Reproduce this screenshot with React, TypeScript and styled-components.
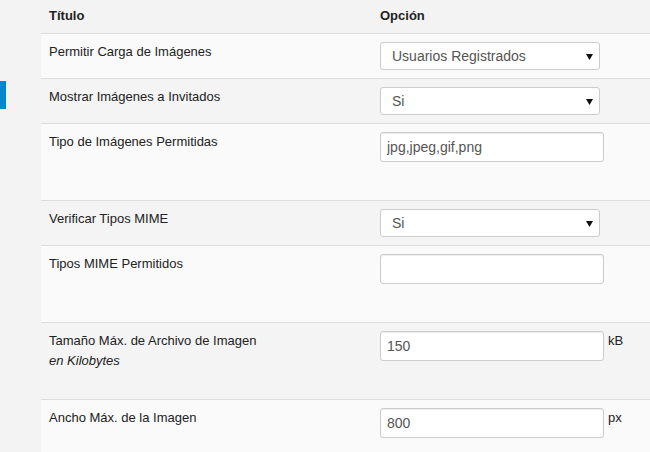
import React from "react";
import styled, { createGlobalStyle } from "styled-components";

const GlobalStyle = createGlobalStyle`
  html, body {
    margin: 0;
    padding: 0;
    background: #f3f3f3;
    font-family: "Liberation Sans", Arial, sans-serif;
    font-size: 13px;
    color: #333;
  }
`;

type Field =
  | { kind: "select"; value: string }
  | { kind: "input"; value: string; unit?: string };

type Setting = {
  title: string;
  hint?: string;
  tall?: boolean;
  field: Field;
};

const settings: Setting[] = [
  { title: "Permitir Carga de Imágenes", field: { kind: "select", value: "Usuarios Registrados" } },
  { title: "Mostrar Imágenes a Invitados", field: { kind: "select", value: "Si" } },
  { title: "Tipo de Imágenes Permitidas", tall: true, field: { kind: "input", value: "jpg,jpeg,gif,png" } },
  { title: "Verificar Tipos MIME", field: { kind: "select", value: "Si" } },
  { title: "Tipos MIME Permitidos", tall: true, field: { kind: "input", value: "" } },
  {
    title: "Tamaño Máx. de Archivo de Imagen",
    hint: "en Kilobytes",
    tall: true,
    field: { kind: "input", value: "150", unit: "kB" },
  },
  { title: "Ancho Máx. de la Imagen", tall: true, field: { kind: "input", value: "800", unit: "px" } },
];

export default function App() {
  return (
    <>
      <GlobalStyle />
      <Page>
        <Sidebar>
          <ActiveMarker />
        </Sidebar>
        <Table>
          <HeadRow>
            <HeadCell>Título</HeadCell>
            <HeadCell>Opción</HeadCell>
          </HeadRow>
          {settings.map((s, i) => (
            <Row key={s.title} $odd={i % 2 === 0} $tall={!!s.tall}>
              <LabelCell>
                <div>{s.title}</div>
                {s.hint && <Hint>{s.hint}</Hint>}
              </LabelCell>
              <FieldCell>
                {s.field.kind === "select" ? (
                  <SelectWrap>
                    <Select defaultValue={s.field.value}>
                      <option>{s.field.value}</option>
                    </Select>
                    <Arrow width="7" height="6" viewBox="0 0 7 6">
                      <path d="M0 0H7L3.5 6Z" fill="#111" />
                    </Arrow>
                  </SelectWrap>
                ) : (
                  <>
                    <Input type="text" defaultValue={s.field.value} />
                    {s.field.unit && <Unit>{s.field.unit}</Unit>}
                  </>
                )}
              </FieldCell>
            </Row>
          ))}
        </Table>
      </Page>
    </>
  );
}

const Page = styled.div`
  display: flex;
  height: 452px;
  overflow: hidden;
  background: #f3f3f3;
`;

const Sidebar = styled.div`
  width: 41px;
  flex-shrink: 0;
  padding-top: 81px;
`;

const ActiveMarker = styled.div`
  width: 6px;
  height: 28px;
  background: #0088cc;
`;

const Table = styled.div`
  flex: 1;
  display: flex;
  flex-direction: column;
`;

const HeadRow = styled.div`
  display: grid;
  grid-template-columns: 331px 1fr;
  flex-shrink: 0;
  height: 33px;
  border-bottom: 1px solid #dddddd;
  background: #f3f3f3;
`;

const HeadCell = styled.div`
  padding: 6px 8px 0;
  line-height: 20px;
  font-weight: bold;
  color: #222;
`;

const Row = styled.div<{ $odd: boolean; $tall: boolean }>`
  display: grid;
  grid-template-columns: 331px 1fr;
  flex-shrink: 0;
  height: ${(p) => (p.$tall ? 76 : 44)}px;
  border-bottom: 1px solid #dddddd;
  background: ${(p) => (p.$odd ? "#fafafa" : "#f4f4f4")};
`;

const LabelCell = styled.div`
  padding: 8px 8px 0;
  line-height: 20px;
  color: #222;
`;

const Hint = styled.div`
  font-style: italic;
`;

const FieldCell = styled.div`
  display: flex;
  align-items: flex-start;
  padding: 8px 8px 0;
`;

const SelectWrap = styled.div`
  position: relative;
  width: 220px;
`;

const Select = styled.select`
  appearance: none;
  width: 220px;
  height: 28px;
  padding: 0 24px 0 11px;
  border: 1px solid #cccccc;
  border-radius: 3px;
  background: #ffffff;
  font-family: inherit;
  font-size: 14px;
  color: #555;
  outline: none;
`;

const Arrow = styled.svg`
  position: absolute;
  right: 7px;
  top: 12px;
  pointer-events: none;
`;

const Input = styled.input`
  box-sizing: border-box;
  width: 224px;
  height: 30px;
  padding: 0 6px;
  border: 1px solid #cccccc;
  border-radius: 3px;
  background: #ffffff;
  box-shadow: inset 0 1px 1px rgba(0, 0, 0, 0.075);
  font-family: inherit;
  font-size: 14px;
  color: #555;
  outline: none;
`;

const Unit = styled.span`
  margin-left: 4px;
  line-height: 20px;
  color: #222;
`;
